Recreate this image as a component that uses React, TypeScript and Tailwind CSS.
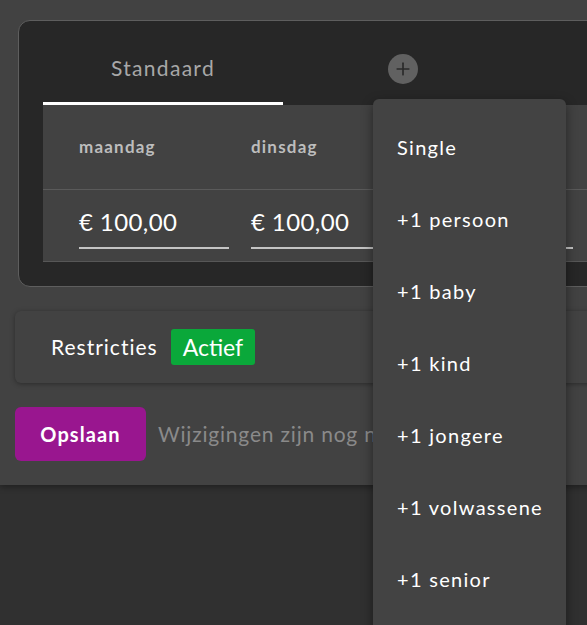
import { Plus } from 'lucide-react'

const days = ['maandag', 'dinsdag', 'woensdag']
const options = ['Single', '+1 persoon', '+1 baby', '+1 kind', '+1 jongere', '+1 volwassene', '+1 senior']

export default function App() {
  return (
    <div className="relative w-[587px] h-[625px] overflow-hidden bg-[#303030] font-['Lato',sans-serif]">
      {/* top section */}
      <div className="h-[485px] w-[760px] bg-[#424242] shadow-[0_2px_6px_rgba(0,0,0,0.35)] pt-[20px]">
        <div className="ml-[18px] w-[720px] h-[267px] rounded-xl border border-[#5e5e5e] bg-[#272727]">
          {/* tabs */}
          <div className="flex pl-[24px] h-[84px]">
            <div className="w-[240px] flex items-center justify-center pt-[12px] border-b-[3px] border-white text-[21px] tracking-[1.3px] text-[#a8a8a8]">
              Standaard
            </div>
            <div className="w-[240px] flex items-center justify-center pt-[12px]">
              <span className="w-[30px] h-[30px] rounded-full bg-[#616161] flex items-center justify-center text-[#2a2a2a]">
                <Plus size={20} strokeWidth={2} />
              </span>
            </div>
          </div>
          {/* table */}
          <div className="ml-[24px] bg-[#424242] border-b border-[#575757]">
            <div className="flex gap-[22px] pl-[36px] h-[85px] items-center border-b border-[#5a5a5a]">
              {days.map(d => (
                <div key={d} className="w-[150px] text-[17px] tracking-[1.2px] font-bold text-[#bdbdbd]">{d}</div>
              ))}
            </div>
            <div className="flex gap-[22px] pl-[36px] h-[71px] pt-[16px]">
              {days.map(d => (
                <div key={d} className="w-[150px] h-[43px] border-b-2 border-[#c4c4c4] text-[24px] tracking-[0.4px] text-white leading-[32px]">
                  € 100,00
                </div>
              ))}
            </div>
          </div>
        </div>

        {/* restricties */}
        <div className="ml-[15px] mt-[24px] w-[720px] h-[72px] rounded-md bg-[#424242] shadow-[0_1px_5px_rgba(0,0,0,0.35)] flex items-center pl-[36px] gap-[13px]">
          <span className="text-[21px] tracking-[1px] text-white">Restricties</span>
          <span className="h-[36px] px-[12px] rounded-[3px] bg-[#0aa83a] text-white text-[23px] flex items-center">Actief</span>
        </div>

        {/* save row */}
        <div className="ml-[15px] mt-[24px] flex items-center gap-[12px]">
          <button className="w-[131px] h-[54px] rounded-md bg-[#99168f] text-white text-[20px] tracking-[1.1px] font-bold">Opslaan</button>
          <span className="text-[21px] tracking-[0.8px] text-[#8a8a8a] whitespace-nowrap">Wijzigingen zijn nog niet opgeslagen</span>
        </div>
      </div>

      {/* dropdown menu */}
      <div className="absolute left-[373px] top-[99px] w-[193px] h-[560px] rounded-md bg-[#434343] shadow-[0_4px_12px_rgba(0,0,0,0.45)] pt-[12px]">
        {options.map(o => (
          <div key={o} className="h-[72px] flex items-center pl-[24px] text-[20px] tracking-[1.3px] text-white">{o}</div>
        ))}
      </div>
    </div>
  )
}
